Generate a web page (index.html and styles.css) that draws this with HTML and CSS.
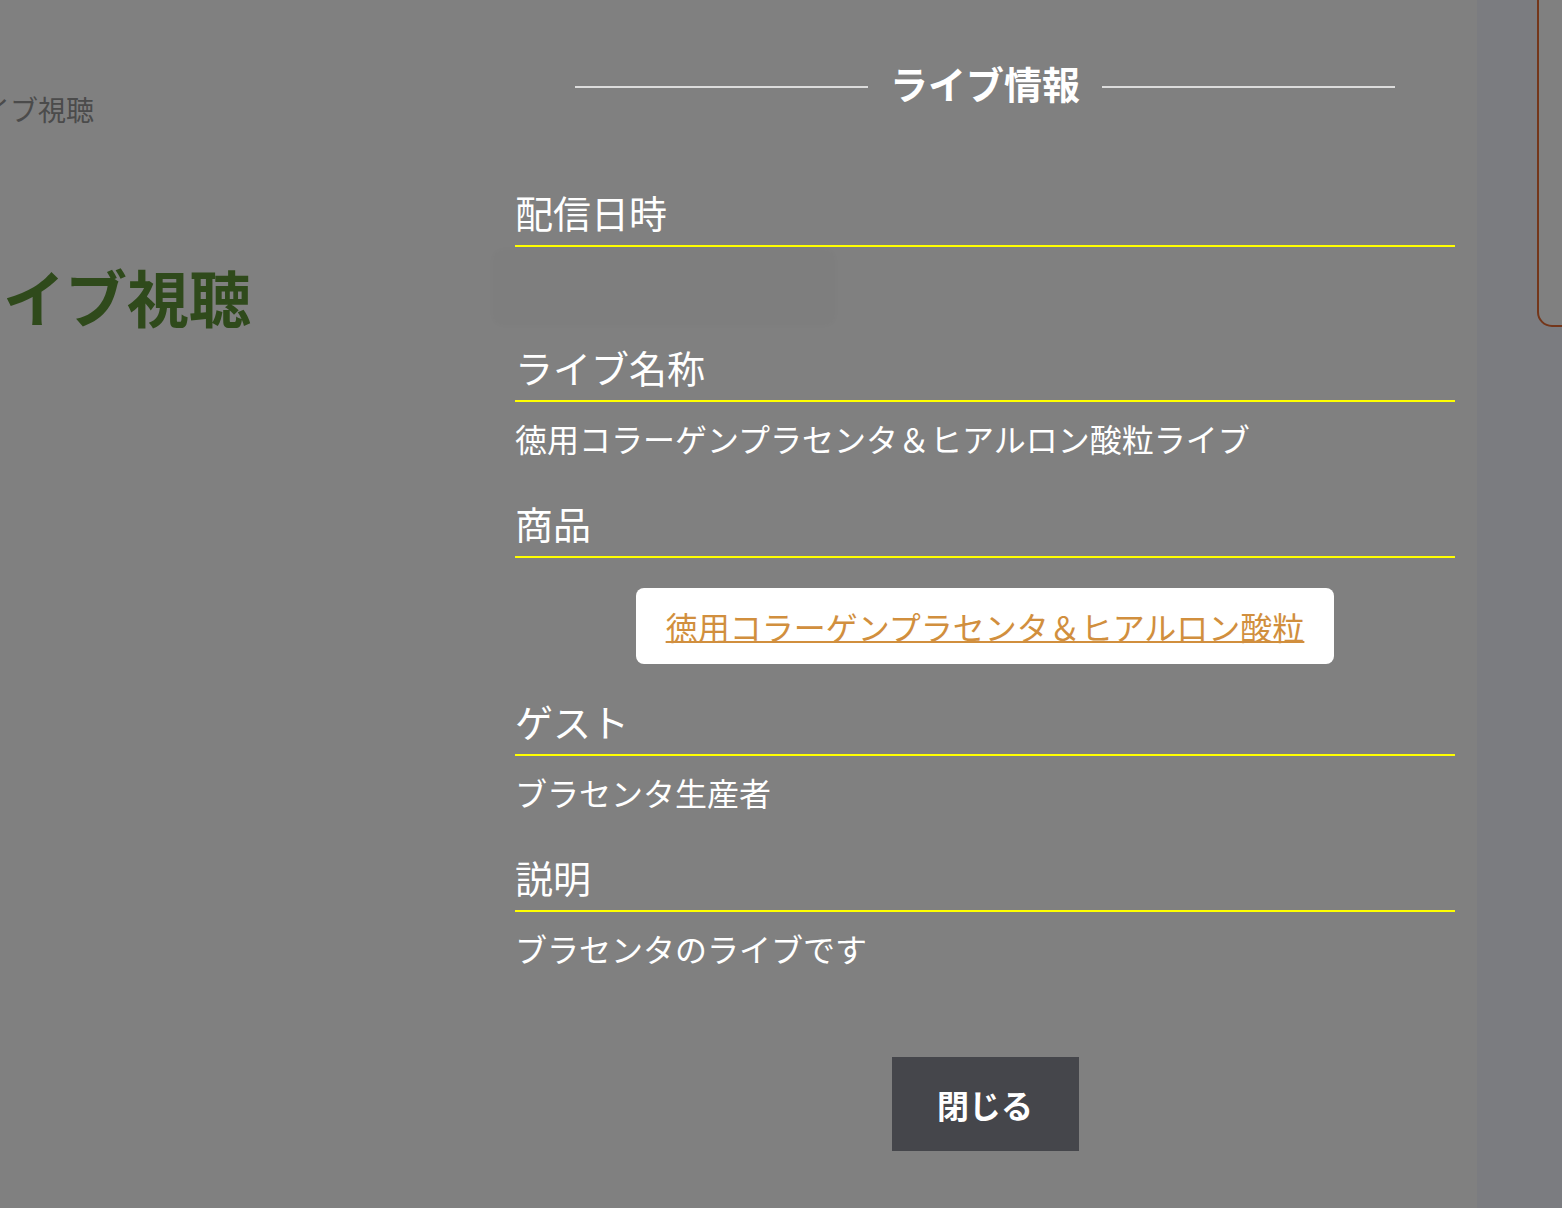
FILE: index.html
```html
<!DOCTYPE html>
<html lang="ja">
<head>
<meta charset="utf-8">
<title>ライブ情報</title>
<link rel="stylesheet" href="styles.css">
</head>
<body>
<div class="layout">
  <div class="side">
    <div class="crumb">ライブ視聴</div>
    <h1 class="heading">ライブ視聴</h1>
  </div>
  <div class="modal">
    <div class="title-row">
      <span class="title-line"></span>
      <h2 class="title">ライブ情報</h2>
      <span class="title-line"></span>
    </div>
    <div class="section first">
      <div class="label">配信日時</div>
      <div class="value date-value"><div class="blurred"></div></div>
    </div>
    <div class="section">
      <div class="label">ライブ名称</div>
      <div class="value">徳用コラーゲンプラセンタ＆ヒアルロン酸粒ライブ</div>
    </div>
    <div class="section">
      <div class="label">商品</div>
      <div class="product-row"><a class="product" href="#">徳用コラーゲンプラセンタ＆ヒアルロン酸粒</a></div>
    </div>
    <div class="section">
      <div class="label">ゲスト</div>
      <div class="value">ブラセンタ生産者</div>
    </div>
    <div class="section">
      <div class="label">説明</div>
      <div class="value">ブラセンタのライブです</div>
    </div>
    <button class="close" type="button">閉じる</button>
  </div>
  <div class="strip">
    <div class="frame"></div>
  </div>
</div>
</body>
</html>
```
FILE: styles.css
```css
html, body {
  margin: 0;
  padding: 0;
}
body {
  background: #808080;
  font-family: "Noto Sans CJK JP", "Noto Sans", sans-serif;
  height: 1208px;
  overflow: hidden;
}
.layout {
  display: flex;
  height: 1208px;
}
.side {
  width: 515px;
  flex: none;
  overflow: hidden;
}
.crumb {
  font-size: 28px;
  line-height: 40px;
  color: #4b4b4b;
  white-space: nowrap;
  margin: 89px 0 0 -46px;
}
.heading {
  font-size: 62px;
  line-height: 80px;
  font-weight: 700;
  color: #2f4a1b;
  white-space: nowrap;
  margin: 127px 0 0 -59px;
}
.modal {
  width: 940px;
  flex: none;
  display: flex;
  flex-direction: column;
  padding-top: 58px;
  color: #ffffff;
}
.title-row {
  display: flex;
  align-items: center;
  gap: 22px;
  margin: 0 60px;
}
.title-line {
  flex: 1;
  height: 2px;
  margin-top: 8px;
  background: #dcdcdc;
}
.title {
  margin: 0;
  font-size: 38px;
  line-height: 50px;
  font-weight: 700;
  white-space: nowrap;
}
.section.first {
  margin-top: 83px;
}
.label {
  font-size: 38px;
  line-height: 42px;
  padding-bottom: 12px;
  border-bottom: 2px solid #ffff00;
}
.value {
  font-size: 32px;
  line-height: 48px;
  padding: 12px 0 40px;
}
.date-value {
  box-sizing: border-box;
  height: 99px;
  padding: 3px 0 0;
}
.blurred {
  margin-left: -22px;
  width: 342px;
  height: 75px;
  border-radius: 10px;
  background: rgba(0, 0, 0, 0.012);
  box-shadow: 0 0 6px rgba(0, 0, 0, 0.02);
}
.product-row {
  display: flex;
  justify-content: center;
  padding: 30px 0 36px;
}
.product {
  display: block;
  background: #ffffff;
  border-radius: 8px;
  height: 76px;
  padding: 0 30px;
  font-size: 32px;
  line-height: 76px;
  color: #d18f3e;
  text-decoration: underline;
  text-decoration-thickness: 2px;
  white-space: nowrap;
}
.close {
  align-self: center;
  margin-top: 45px;
  width: 187px;
  height: 94px;
  border: none;
  background: #45464b;
  color: #ffffff;
  font-family: "Noto Sans CJK JP", "Noto Sans", sans-serif;
  font-size: 32px;
  font-weight: 700;
  padding: 0;
}
.strip {
  margin-left: auto;
  width: 85px;
  flex: none;
  background: #7b7c80;
  overflow: hidden;
}
.frame {
  margin: -20px 0 0 60px;
  width: 80px;
  height: 343px;
  border: 2px solid #74361a;
  border-radius: 15px;
  background: #808080;
}
```
